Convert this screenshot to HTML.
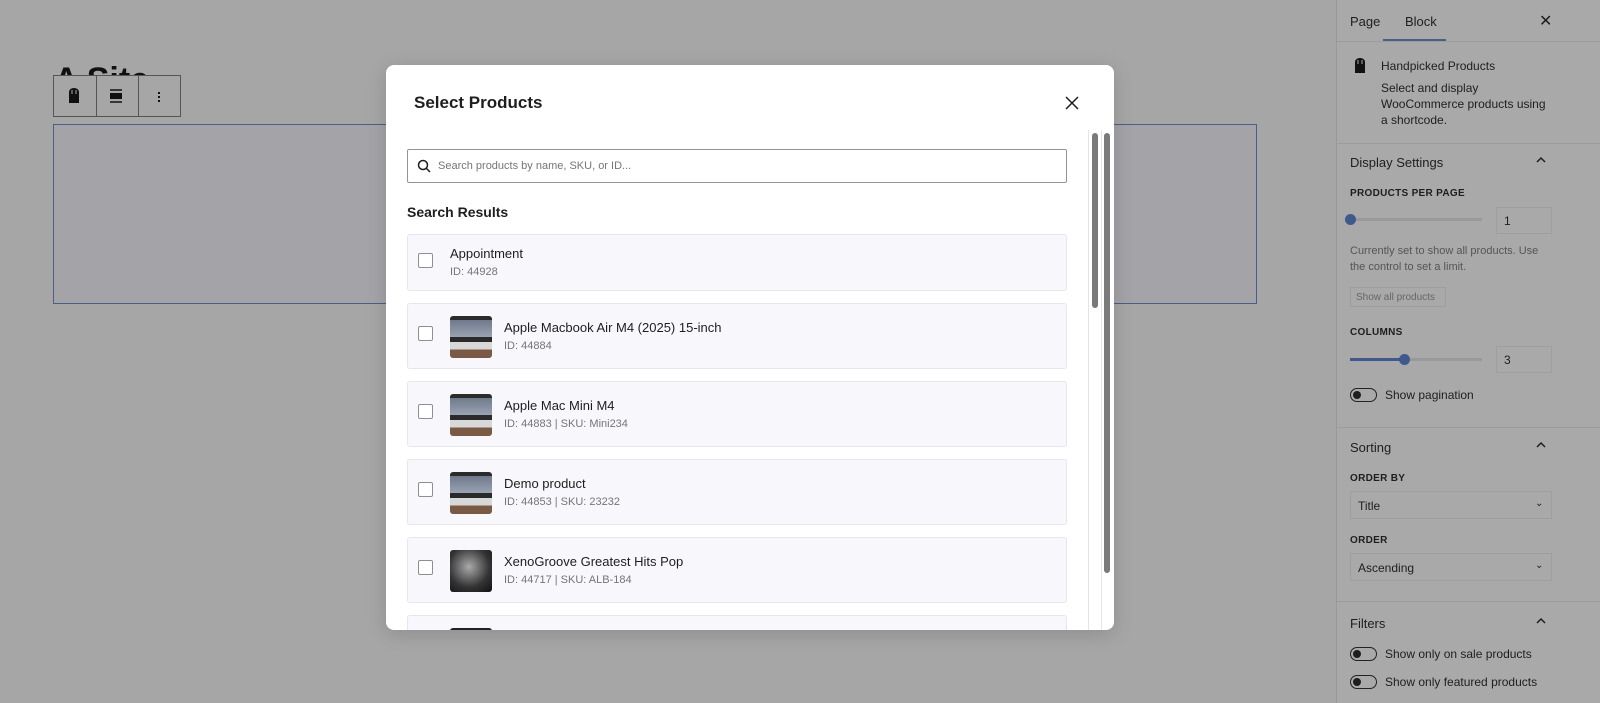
<!DOCTYPE html>
<html><head><meta charset="utf-8"><style>
*{box-sizing:border-box;margin:0;padding:0}
body{width:1600px;height:703px;overflow:hidden;background:#a6a6a6;font-family:"Liberation Sans",sans-serif;position:relative;color:#1e1e1e}
.a{position:absolute}
.t{font-size:13px}
.side{left:1336px;top:0;width:264px;height:703px;background:#a9a9a9;border-left:1px solid #999}
.hr{position:absolute;left:0;width:264px;height:1px;background:#9c9c9c}
.lab{font-size:10px;font-weight:bold;letter-spacing:.3px;color:#1e1e1e}
.sel{border:1px solid #9e9e9e;background:#a9a9a9;width:202px;height:28px;font-size:12px;padding:7px 7px}
.tog{width:27px;height:14px;border:1px solid #222;border-radius:8px}
.tog:after{content:"";position:absolute;left:2px;top:2px;width:8px;height:8px;border-radius:50%;background:#1e1e1e}
.modal{left:386px;top:65px;width:728px;height:565px;background:#fff;border-radius:8px;overflow:hidden;box-shadow:0 4px 20px rgba(0,0,0,.15)}
.item{left:21px;width:660px;background:#f8f8fc;border:1px solid #e6e6ec;border-radius:3px}
.cb{left:10px;width:15px;height:15px;border:1px solid #8f8f8f;border-radius:2px;background:#fff}
.th{left:42px;width:42px;height:42px;border-radius:3px;background:linear-gradient(#2b2b2b 0,#2b2b2b 10%,#6f7a8c 10%,#9aa3b2 50%,#2a2a2a 50%,#2a2a2a 62%,#d8d8d8 62%,#d8d8d8 80%,#7a5a45 80%)}
.nm{font-size:13px;color:#1e1e1e}
.id{font-size:11px;color:#757575}
</style></head><body>
<div class="a" style="left:54px;top:58px;font-size:34px;font-weight:bold;color:#111;height:18px;overflow:hidden;line-height:44px">A Site</div>
<div class="a" style="left:53px;top:75px;width:128px;height:42px;border:1px solid #555;background:#a6a6a6"></div>
<div class="a" style="left:96px;top:75px;width:1px;height:42px;background:#555"></div>
<div class="a" style="left:138px;top:75px;width:1px;height:42px;background:#555"></div>
<svg class="a" style="left:66px;top:87px" width="16" height="18"><path d="M3 5a5 4 0 0 1 10 0v11H3z" fill="#111"/><path d="M6 3v4M10 3v4" stroke="#a6a6a6" stroke-width="1"/></svg>
<svg class="a" style="left:108px;top:88px" width="16" height="16"><path d="M2 2h12M2 14h12" stroke="#111" stroke-width="1.5"/><rect x="2" y="5" width="12" height="6" fill="#111"/></svg>
<div class="a" style="left:158px;top:92px;width:2px;height:2px;background:#111;box-shadow:0 4px #111,0 8px #111"></div>
<div class="a" style="left:53px;top:124px;width:1204px;height:180px;border:1px solid #4a5f86;background:#a4a4a8"></div>

<div class="a side">
<div class="a t" style="left:13px;top:14px">Page</div>
<div class="a t" style="left:68px;top:14px">Block</div>
<div class="a" style="left:46px;top:39px;width:63px;height:2px;background:#4a5f86"></div>
<div class="a" style="left:202px;top:11px;font-size:16px">✕</div>
<div class="hr" style="top:41px"></div>
<svg class="a" style="left:16px;top:58px" width="14" height="16"><path d="M2 4a5 4 0 0 1 10 0v11H2z" fill="#111"/><path d="M5 2v4M9 2v4" stroke="#a9a9a9"/></svg>
<div class="a" style="left:44px;top:59px;font-size:12px">Handpicked Products</div>
<div class="a" style="left:44px;top:80px;font-size:12px;line-height:16px;width:200px">Select and display<br>WooCommerce products using<br>a shortcode.</div>
<div class="hr" style="top:143px"></div>
<div class="a t" style="left:13px;top:155px">Display Settings</div>
<svg class="a" style="left:198px;top:156px" width="12" height="8"><path d="M2 6l4-4 4 4" stroke="#1e1e1e" stroke-width="1.5" fill="none"/></svg>
<div class="a lab" style="left:13px;top:188px">PRODUCTS PER PAGE</div>
<div class="a" style="left:13px;top:218px;width:132px;height:3px;background:#999"></div>
<div class="a" style="left:8px;top:214px;width:11px;height:11px;border-radius:50%;background:#3f5a8a"></div>
<div class="a" style="left:159px;top:207px;width:56px;height:27px;border:1px solid #9e9e9e;font-size:12px;padding:6px 7px">1</div>
<div class="a" style="left:13px;top:243px;font-size:11px;line-height:16px;color:#555;width:200px">Currently set to show all products. Use the control to set a limit.</div>
<div class="a" style="left:13px;top:287px;width:96px;height:20px;border:1px solid #9e9e9e;font-size:10px;color:#666;padding:4px 5px">Show all products</div>
<div class="a lab" style="left:13px;top:327px">COLUMNS</div>
<div class="a" style="left:13px;top:358px;width:132px;height:3px;background:#999"></div>
<div class="a" style="left:13px;top:358px;width:54px;height:3px;background:#3f5a8a"></div>
<div class="a" style="left:62px;top:354px;width:11px;height:11px;border-radius:50%;background:#3f5a8a"></div>
<div class="a" style="left:159px;top:346px;width:56px;height:27px;border:1px solid #9e9e9e;font-size:12px;padding:6px 7px">3</div>
<div class="a tog" style="left:13px;top:388px"></div>
<div class="a" style="left:48px;top:388px;font-size:12px">Show pagination</div>
<div class="hr" style="top:427px"></div>
<div class="a t" style="left:13px;top:440px">Sorting</div>
<svg class="a" style="left:198px;top:441px" width="12" height="8"><path d="M2 6l4-4 4 4" stroke="#1e1e1e" stroke-width="1.5" fill="none"/></svg>
<div class="a lab" style="left:13px;top:473px">ORDER BY</div>
<div class="a sel" style="left:13px;top:491px">Title</div>
<div class="a" style="left:198px;top:498px;font-size:10px">⌄</div>
<div class="a lab" style="left:13px;top:535px">ORDER</div>
<div class="a sel" style="left:13px;top:553px">Ascending</div>
<div class="a" style="left:198px;top:560px;font-size:10px">⌄</div>
<div class="hr" style="top:601px"></div>
<div class="a t" style="left:13px;top:616px">Filters</div>
<svg class="a" style="left:198px;top:617px" width="12" height="8"><path d="M2 6l4-4 4 4" stroke="#1e1e1e" stroke-width="1.5" fill="none"/></svg>
<div class="a tog" style="left:13px;top:647px"></div>
<div class="a" style="left:48px;top:647px;font-size:12px">Show only on sale products</div>
<div class="a tog" style="left:13px;top:675px"></div>
<div class="a" style="left:48px;top:675px;font-size:12px">Show only featured products</div>
</div>

<div class="a modal">
<div class="a" style="left:28px;top:28px;font-size:17px;font-weight:bold">Select Products</div>
<svg class="a" style="left:678px;top:30px" width="16" height="16"><path d="M2 2l12 12M14 2L2 14" stroke="#1e1e1e" stroke-width="1.5"/></svg>
<div class="a" style="left:21px;top:84px;width:660px;height:34px;border:1px solid #949494;border-radius:2px"></div>
<svg class="a" style="left:31px;top:94px" width="14" height="14"><circle cx="6" cy="6" r="4.5" stroke="#1e1e1e" stroke-width="1.5" fill="none"/><path d="M9.5 9.5l3.5 3.5" stroke="#1e1e1e" stroke-width="1.5"/></svg>
<div class="a" style="left:52px;top:95px;font-size:11px;color:#757575">Search products by name, SKU, or ID...</div>
<div class="a" style="left:21px;top:139px;font-size:14px;font-weight:bold">Search Results</div>
<div class="a" style="left:702px;top:65px;width:1px;height:500px;background:#e4e4e8"></div>
<div class="a" style="left:715px;top:65px;width:1px;height:500px;background:#e4e4e8"></div>
<div class="a" style="left:706px;top:68px;width:6px;height:175px;border-radius:3px;background:#7a7a7a"></div>
<div class="a" style="left:718px;top:68px;width:6px;height:440px;border-radius:3px;background:#7a7a7a"></div>

<div class="a item" style="top:169px;height:57px">
<div class="a cb" style="top:18px"></div>
<div class="a nm" style="left:42px;top:11px">Appointment</div>
<div class="a id" style="left:42px;top:31px">ID: 44928</div></div>
<div class="a item" style="top:238px;height:66px">
<div class="a cb" style="top:22px"></div><div class="a th" style="top:12px"></div>
<div class="a nm" style="left:96px;top:16px">Apple Macbook Air M4 (2025) 15-inch</div>
<div class="a id" style="left:96px;top:36px">ID: 44884</div></div>
<div class="a item" style="top:316px;height:66px">
<div class="a cb" style="top:22px"></div><div class="a th" style="top:12px"></div>
<div class="a nm" style="left:96px;top:16px">Apple Mac Mini M4</div>
<div class="a id" style="left:96px;top:36px">ID: 44883 | SKU: Mini234</div></div>
<div class="a item" style="top:394px;height:66px">
<div class="a cb" style="top:22px"></div><div class="a th" style="top:12px"></div>
<div class="a nm" style="left:96px;top:16px">Demo product</div>
<div class="a id" style="left:96px;top:36px">ID: 44853 | SKU: 23232</div></div>
<div class="a item" style="top:472px;height:66px">
<div class="a cb" style="top:22px"></div><div class="a th" style="top:12px;background:radial-gradient(circle at 45% 40%,#aaa,#333 60%,#111)"></div>
<div class="a nm" style="left:96px;top:16px">XenoGroove Greatest Hits Pop</div>
<div class="a id" style="left:96px;top:36px">ID: 44717 | SKU: ALB-184</div></div>
<div class="a item" style="top:550px;height:66px">
<div class="a th" style="top:12px;background:#222"></div></div>
</div>
</body></html>
